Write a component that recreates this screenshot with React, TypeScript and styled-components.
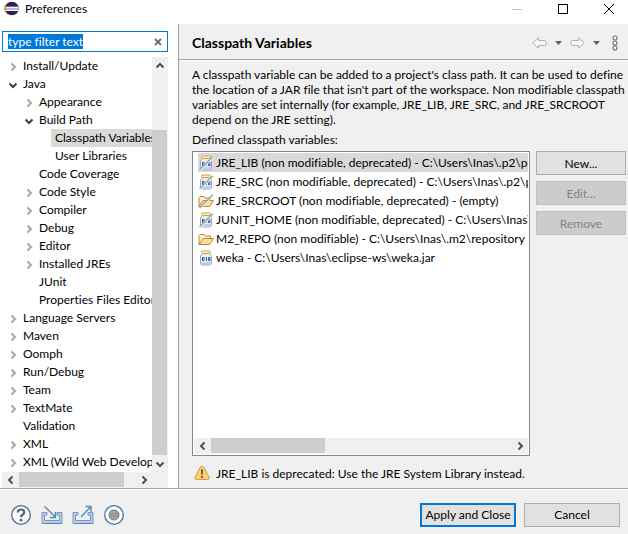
import React, { useEffect, useRef, useState } from "react";
import styled, { createGlobalStyle } from "styled-components";

const GlobalStyle = createGlobalStyle`
  * { box-sizing: border-box; }
  body {
    margin: 0;
    background: #f0f0f0;
    color: #000;
    font: 12px/15px Lato, "Open Sans", sans-serif;
    font-variant-ligatures: none;
  }
  button, input { font: inherit; color: inherit; }
`;

const Window = styled.div`
  display: flex;
  flex-direction: column;
  min-height: 100vh;
`;

const TitleBar = styled.header`
  display: flex;
  align-items: center;
  height: 24px;
  padding: 0 0 7px 4px;
  gap: 6px;
  background: #fff;
`;

const Title = styled.span`
  flex: 1;
`;

const CaptionButton = styled.button`
  display: flex;
  align-items: center;
  justify-content: center;
  width: 46px;
  height: 16px;
  padding: 0;
  border: 0;
  background: transparent;
`;

const CaptionButtons = styled.div`
  display: flex;
  margin-right: -4px;
`;

const Body = styled.div`
  display: flex;
  flex: 1;
  min-height: 0;
`;

const Sidebar = styled.aside`
  display: flex;
  flex-direction: column;
  flex: 0 0 179px;
  min-width: 0;
  padding: 7px 10px 0 2px;
  gap: 5px;
  background: #fff;
  border-right: 1px solid #a0a0a0;
`;

const FilterBox = styled.label`
  display: flex;
  align-items: center;
  height: 21px;
  padding: 0 5px;
  border: 1px solid #0078d7;
`;

const FilterInput = styled.input`
  flex: 1;
  min-width: 0;
  height: 17px;
  padding: 0;
  border: 0;
  outline: 0;
  background: transparent;
  &::selection {
    background: #0078d7;
    color: #fff;
  }
`;

const PlainButton = styled.button`
  display: flex;
  align-items: center;
  justify-content: center;
  padding: 0;
  border: 0;
  background: transparent;
`;

const TreeArea = styled.div`
  display: grid;
  grid-template-columns: minmax(0, 1fr) 16px;
  grid-template-rows: 1fr 16px;
  flex: 1;
`;

const Tree = styled.ul`
  margin: 0;
  padding: 0;
  list-style: none;
  overflow: hidden;
`;

const TreeRow = styled.li<{ $level: number }>`
  display: flex;
  align-items: center;
  height: 18px;
  padding-left: ${(p) => p.$level * 16 + 4}px;
`;

const Expander = styled(PlainButton)`
  flex: 0 0 13px;
  height: 18px;
  padding-top: 2px;
`;

const TreeLabel = styled.span<{ $selected?: boolean }>`
  flex: 1;
  min-width: 0;
  padding-left: 4px;
  line-height: 18px;
  white-space: nowrap;
  overflow: hidden;
  background: ${(p) => (p.$selected ? "#d9d9d9" : "transparent")};
`;

const Bar = styled.div<{ $vertical?: boolean }>`
  display: flex;
  flex-direction: ${(p) => (p.$vertical ? "column" : "row")};
  ${(p) => (p.$vertical ? "width: 16px;" : "height: 16px;")}
  background: #f0f0f0;
`;

const BarArrow = styled(PlainButton)`
  flex: 0 0 17px;
`;

const Space = styled.div<{ $grow: number }>`
  flex: ${(p) => p.$grow} 1 0;
`;

const Thumb = styled.div<{ $grow: number; $vertical?: boolean }>`
  flex: ${(p) => p.$grow} 1 0;
  background: #cdcdcd;
  ${(p) => (p.$vertical ? "width: 15px;" : "height: 15px;")}
`;

const Corner = styled.div`
  background: #f0f0f0;
`;

const Main = styled.main`
  display: flex;
  flex-direction: column;
  flex: 1;
  min-width: 0;
`;

const PageHeader = styled.div`
  display: flex;
  align-items: center;
  height: 36px;
  padding: 2px 10px 0 13px;
  border-bottom: 1px solid #a0a0a0;
  box-shadow: 0 1px #fff;
`;

const PageTitle = styled.h1`
  flex: 1;
  margin: 0;
  font-size: 14px;
  line-height: 18px;
  font-weight: 700;
`;

const Nav = styled.nav`
  display: flex;
  align-items: center;
  gap: 8px;
`;

const MenuButton = styled(PlainButton)`
  margin-left: 4px;
`;

const PageContent = styled.div`
  display: flex;
  flex-direction: column;
  flex: 1;
  padding: 7px 2px 7px 13px;
`;

const Description = styled.p`
  margin: 0;
`;

const ListLabel = styled.h2`
  margin: 5px 0 4px;
  font-size: 12px;
  font-weight: 400;
  line-height: 15px;
`;

const Columns = styled.div`
  display: flex;
  flex: 1;
  gap: 6px;
  align-items: stretch;
`;

const ListBox = styled.div`
  display: flex;
  flex-direction: column;
  flex: 1;
  min-width: 0;
  padding: 1px;
  border: 1px solid #828790;
  background: #fff;
`;

const List = styled.ul`
  flex: 1;
  margin: 0;
  padding: 0 0 0 4px;
  list-style: none;
  overflow: hidden;
`;

const ListItem = styled.li<{ $selected?: boolean }>`
  display: flex;
  align-items: center;
  gap: 2px;
  height: 19px;
  white-space: nowrap;
  overflow: hidden;
  background: ${(p) => (p.$selected ? "#d9d9d9" : "transparent")};
  svg { flex: none; }
`;

const Actions = styled.div`
  display: flex;
  flex-direction: column;
  gap: 6px;
  flex: 0 0 90px;
`;

const PushButton = styled.button<{ $primary?: boolean }>`
  height: 24px;
  padding: 0;
  border: ${(p) => (p.$primary ? "2px solid #0078d7" : "1px solid #adadad")};
  background: #e1e1e1;
  white-space: nowrap;
  &:disabled {
    color: #838383;
    background: #cccccc;
    border-color: #bfbfbf;
  }
`;

const Message = styled.div`
  display: flex;
  align-items: center;
  gap: 6px;
  height: 16px;
  margin: 9px 0 0 2px;
`;

const Footer = styled.footer`
  display: flex;
  align-items: center;
  height: 46px;
  padding: 6px 8px 0 10px;
  border-top: 1px solid #a0a0a0;
  box-shadow: inset 0 1px #fff;
`;

const Tools = styled.div`
  display: flex;
  flex: 1;
  gap: 9px;
`;

const DialogButtons = styled.div`
  display: grid;
  grid-template-columns: 96px 96px;
  gap: 8px;
`;

type Direction = "up" | "down" | "left" | "right";

const chevrons: Record<Direction, string> = {
  up: "M1.5 6.5 5 3l3.5 3.5",
  down: "M1.5 3.5 5 7l3.5-3.5",
  left: "M6.5 1.5 3 5l3.5 3.5",
  right: "M3.5 1.5 7 5 3.5 8.5",
};

const Chevron = ({ dir, color = "#505050" }: { dir: Direction; color?: string }) => (
  <svg width="10" height="10" viewBox="0 0 10 10" fill="none" stroke={color} strokeWidth="2">
    <path d={chevrons[dir]} />
  </svg>
);

const EclipseLogo = () => (
  <svg width="15" height="15" viewBox="0 0 15 15">
    <circle cx="6.5" cy="7.5" r="6.5" fill="#f7941e" />
    <circle cx="8" cy="7.5" r="6.8" fill="#2c2255" />
    <path d="M1.500 6.500h13M1.500 9.500h13" stroke="#fff" />
    <path d="M1.300 7.500h13.500M1.300 8.500h13.500" stroke="#b9b4dc" />
    <path d="M1.500 5.500h13" stroke="#6f67a3" />
  </svg>
);

const HistoryArrow = ({ back }: { back?: boolean }) => (
  <svg width="15" height="12" viewBox="0 0 15 12" fill="#f8f8f8" stroke="#b0b0b0" strokeLinejoin="round">
    <path d={back ? "M.7 6 6.5.7v2.8h6q1.500 0 1.500 1.500v2q0 1.500-1.500 1.500h-6v2.800Z" : "M14.300 6 8.500.7v2.800h-6Q1 3.500 1 5v2q0 1.500 1.500 1.500h6v2.800Z"} />
  </svg>
);

const DropArrow = () => (
  <svg width="7" height="4" viewBox="0 0 7 4">
    <path d="M0 0h7L3.500 4Z" fill="#606060" />
  </svg>
);

const Menu = () => (
  <svg width="6" height="16" viewBox="0 0 6 16" fill="#fff" stroke="#707070" strokeWidth="1.100">
    <circle cx="3" cy="3" r="2" />
    <circle cx="3" cy="8" r="2" />
    <circle cx="3" cy="13" r="2" />
  </svg>
);

const Slash = () => (
  <>
    <path d="M2.500 15.500 15.500 2.500" stroke="#f4f4f4" strokeWidth="1.200" />
    <path d="M1.500 15 14.800 1.800" stroke="#a4a4aa" strokeWidth="1.500" />
  </>
);

const JarIcon = ({ deprecated }: { deprecated?: boolean }) => (
  <svg width="16" height="16" viewBox="0 0 16 16">
    <path d="M4.500 3.500h7l2 2.500v7q0 2-2 2h-7q-2 0-2-2V6Z" fill="#e4eefa" stroke="#8fabd0" />
    <path d="M3.500 12h9v2h-9Z" fill="#b9d0ec" />
    <rect x="3.500" y="1" width="9" height="2.500" rx="1" fill="#fff3c0" stroke="#cfa03a" />
    <path d="M4.500 7.500h1.500v3h-1.500ZM8.500 7v4M10.500 7.500h1.500v3h-1.500Z" fill="none" stroke="#3c5680" />
    {deprecated && <Slash />}
  </svg>
);

const FolderIcon = ({ deprecated }: { deprecated?: boolean }) => (
  <svg width="16" height="16" viewBox="0 0 16 16" stroke="#c08432" strokeLinejoin="round">
    <path d="M1 13V4.500l1-1h4l1 1.500h5.500v2.500" fill="#fff3cf" />
    <path d="M1 13.500 5 7.500h10.500l-4 6Z" fill="#fbdc98" />
    {deprecated && <Slash />}
  </svg>
);

const WarningIcon = () => (
  <svg width="16" height="16" viewBox="0 0 16 16">
    <path d="M6.500 2q1.500-2 3 0l5.500 10q.8 2.500-1.500 2.500h-11Q.2 14.500 1 12Z" fill="#fbd071" stroke="#d09a50" />
    <path d="M7 4.500h2L8.600 10H7.400Z" fill="#6b4b22" />
    <circle cx="8" cy="12" r="1.100" fill="#6b4b22" />
  </svg>
);

const HelpIcon = () => (
  <svg width="22" height="22" viewBox="0 0 22 22">
    <circle cx="11" cy="11" r="9.300" fill="#f8f9fb" stroke="#53698b" strokeWidth="1.300" />
    <path d="M7.800 8.500Q7.800 5.500 11 5.500t3.200 2.700Q14.200 9.700 12.500 10.800 11 11.700 11 13.200" fill="none" stroke="#4e6488" strokeWidth="2.200" />
    <circle cx="11" cy="16.200" r="1.400" fill="#4e6488" />
  </svg>
);

const TrayIcon = ({ out }: { out?: boolean }) => (
  <svg width="22" height="20" viewBox="0 0 22 20" fill="none">
    <path d="M3.500 7.500H1v11h20v-11h-5v2.500h2.500v5.500h-15V10H6V7.500Z" fill="#b8cdea" stroke="#7895c4" />
    <path d="M3 18.500h18" stroke="#5c7cb2" />
    {out ? (
      <path d="M9 12 18.500 2M13.500 1.500h5.500V7" stroke="#4b8fb5" strokeWidth="1.400" />
    ) : (
      <path d="M3.500 1.500 14.500 12M14.500 7v5.500H9" stroke="#4b8fb5" strokeWidth="1.400" />
    )}
  </svg>
);

const RecordIcon = () => (
  <svg width="22" height="22" viewBox="0 0 22 22">
    <circle cx="11" cy="11" r="9.300" fill="#fff" stroke="#3e78aa" strokeWidth="1.300" />
    <circle cx="11" cy="11" r="5" fill="#a6a6a6" stroke="#777" />
    <path d="M7 9.500h8M7 12h8" stroke="#8b8b8b" />
  </svg>
);

type Node = { label: string; level: number; state?: "open" | "closed"; selected?: boolean };

const nodes: Node[] = [
  { label: "Install/Update", level: 0, state: "closed" },
  { label: "Java", level: 0, state: "open" },
  { label: "Appearance", level: 1, state: "closed" },
  { label: "Build Path", level: 1, state: "open" },
  { label: "Classpath Variables", level: 2, selected: true },
  { label: "User Libraries", level: 2 },
  { label: "Code Coverage", level: 1 },
  { label: "Code Style", level: 1, state: "closed" },
  { label: "Compiler", level: 1, state: "closed" },
  { label: "Debug", level: 1, state: "closed" },
  { label: "Editor", level: 1, state: "closed" },
  { label: "Installed JREs", level: 1, state: "closed" },
  { label: "JUnit", level: 1 },
  { label: "Properties Files Editor", level: 1 },
  { label: "Language Servers", level: 0, state: "closed" },
  { label: "Maven", level: 0, state: "closed" },
  { label: "Oomph", level: 0, state: "closed" },
  { label: "Run/Debug", level: 0, state: "closed" },
  { label: "Team", level: 0, state: "closed" },
  { label: "TextMate", level: 0, state: "closed" },
  { label: "Validation", level: 0 },
  { label: "XML", level: 0, state: "closed" },
  { label: "XML (Wild Web Developer)", level: 0, state: "closed" },
];

const variables = [
  { icon: "jar", deprecated: true, text: "JRE_LIB (non modifiable, deprecated) - C:\\Users\\Inas\\.p2\\pool" },
  { icon: "jar", deprecated: true, text: "JRE_SRC (non modifiable, deprecated) - C:\\Users\\Inas\\.p2\\pool" },
  { icon: "folder", deprecated: true, text: "JRE_SRCROOT (non modifiable, deprecated) - (empty)" },
  { icon: "jar", deprecated: true, text: "JUNIT_HOME (non modifiable, deprecated) - C:\\Users\\Inas\\.p2\\pool" },
  { icon: "folder", deprecated: false, text: "M2_REPO (non modifiable) - C:\\Users\\Inas\\.m2\\repository" },
  { icon: "jar", deprecated: false, text: "weka - C:\\Users\\Inas\\eclipse-ws\\weka.jar" },
];

export default function App() {
  const [filter, setFilter] = useState("type filter text");
  const filterRef = useRef<HTMLInputElement>(null);

  useEffect(() => {
    filterRef.current?.focus();
    filterRef.current?.select();
  }, []);

  return (
    <Window>
      <GlobalStyle />
      <TitleBar>
        <EclipseLogo />
        <Title>Preferences</Title>
        <CaptionButtons>
          <CaptionButton aria-label="Minimize" disabled>
            <svg width="10" height="10"><path d="M0 5.500h10" stroke="#c4c4c4" /></svg>
          </CaptionButton>
          <CaptionButton aria-label="Maximize">
            <svg width="10" height="10"><rect x=".5" y=".5" width="9" height="9" fill="none" stroke="#000" /></svg>
          </CaptionButton>
          <CaptionButton aria-label="Close">
            <svg width="10" height="10"><path d="M0 0 10 10M10 0 0 10" stroke="#000" /></svg>
          </CaptionButton>
        </CaptionButtons>
      </TitleBar>
      <Body>
        <Sidebar>
          <FilterBox>
            <FilterInput
              ref={filterRef}
              aria-label="Filter preferences"
              value={filter}
              onChange={(e) => setFilter(e.target.value)}
            />
            <PlainButton aria-label="Clear filter" onClick={() => setFilter("")}>
              <svg width="8" height="8"><path d="M1 1l6 6M7 1 1 7" stroke="#6c6c6c" strokeWidth="1.800" /></svg>
            </PlainButton>
          </FilterBox>
          <TreeArea>
            <Tree role="tree">
              {nodes.map((n) => (
                <TreeRow key={n.label} $level={n.level} role="treeitem" aria-selected={!!n.selected}>
                  {n.state ? (
                    <Expander aria-label={`Toggle ${n.label}`}>
                      <Chevron
                        dir={n.state === "open" ? "down" : "right"}
                        color={n.state === "open" ? "#404040" : "#a6a6a6"}
                      />
                    </Expander>
                  ) : (
                    <Expander as="span" />
                  )}
                  <TreeLabel $selected={n.selected}>{n.label}</TreeLabel>
                </TreeRow>
              ))}
            </Tree>
            <Bar $vertical>
              <BarArrow aria-label="Scroll up"><Chevron dir="up" /></BarArrow>
              <Space $grow={56} />
              <Thumb $grow={324} $vertical />
              <BarArrow aria-label="Scroll down"><Chevron dir="down" /></BarArrow>
            </Bar>
            <Bar>
              <BarArrow aria-label="Scroll left"><Chevron dir="left" /></BarArrow>
              <Thumb $grow={104} />
              <Space $grow={11} />
              <BarArrow aria-label="Scroll right"><Chevron dir="right" /></BarArrow>
            </Bar>
            <Corner />
          </TreeArea>
        </Sidebar>
        <Main>
          <PageHeader>
            <PageTitle>Classpath Variables</PageTitle>
            <Nav aria-label="History">
              <PlainButton aria-label="Back"><HistoryArrow back /></PlainButton>
              <PlainButton aria-label="Back history"><DropArrow /></PlainButton>
              <PlainButton aria-label="Forward"><HistoryArrow /></PlainButton>
              <PlainButton aria-label="Forward history"><DropArrow /></PlainButton>
              <MenuButton aria-label="Menu"><Menu /></MenuButton>
            </Nav>
          </PageHeader>
          <PageContent>
            <Description>
              A classpath variable can be added to a project's class path. It can be used to define the location of a
              JAR file that isn't part of the workspace. Non modifiable classpath variables are set internally (for
              example, JRE_LIB, JRE_SRC, and JRE_SRCROOT depend on the JRE setting).
            </Description>
            <ListLabel id="variables">Defined classpath variables:</ListLabel>
            <Columns>
              <ListBox>
                <List role="listbox" aria-labelledby="variables">
                  {variables.map((v, i) => (
                    <ListItem key={v.text} $selected={i === 0} role="option" aria-selected={i === 0}>
                      {v.icon === "jar" ? <JarIcon deprecated={v.deprecated} /> : <FolderIcon deprecated={v.deprecated} />}
                      {v.text}
                    </ListItem>
                  ))}
                </List>
                <Bar>
                  <BarArrow aria-label="Scroll left"><Chevron dir="left" /></BarArrow>
                  <Thumb $grow={114} />
                  <Space $grow={187} />
                  <BarArrow aria-label="Scroll right"><Chevron dir="right" /></BarArrow>
                </Bar>
              </ListBox>
              <Actions>
                <PushButton>New...</PushButton>
                <PushButton disabled>Edit...</PushButton>
                <PushButton disabled>Remove</PushButton>
              </Actions>
            </Columns>
            <Message role="status">
              <WarningIcon />
              JRE_LIB is deprecated: Use the JRE System Library instead.
            </Message>
          </PageContent>
        </Main>
      </Body>
      <Footer>
        <Tools>
          <PlainButton aria-label="Help"><HelpIcon /></PlainButton>
          <PlainButton aria-label="Import"><TrayIcon /></PlainButton>
          <PlainButton aria-label="Export"><TrayIcon out /></PlainButton>
          <PlainButton aria-label="Record preferences"><RecordIcon /></PlainButton>
        </Tools>
        <DialogButtons>
          <PushButton $primary>Apply and Close</PushButton>
          <PushButton>Cancel</PushButton>
        </DialogButtons>
      </Footer>
    </Window>
  );
}
